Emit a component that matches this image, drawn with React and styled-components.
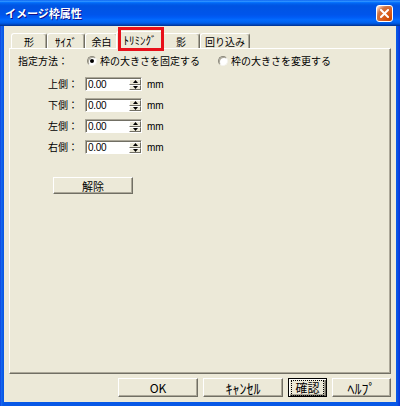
import React from 'react';
import styled, { createGlobalStyle, css } from 'styled-components';

const GlobalStyle = createGlobalStyle`
  html, body { margin: 0; padding: 0; background: #fff; }
  body { font-family: "Noto Sans CJK JP", "Noto Sans", sans-serif; color: #000; }
  * { box-sizing: border-box; }
`;

const Window = styled.div`
  width: 400px;
  height: 406px;
  display: flex;
  flex-direction: column;
  background: linear-gradient(to right, #0831d9 0, #1a6cf0 1px, #0858e6 3px, #0858e6 calc(100% - 3px), #0831d9 100%);
`;

const TitleBar = styled.div`
  flex: none;
  height: 26px;
  display: flex;
  align-items: center;
  justify-content: space-between;
  padding: 0 7px 0 5px;
  background: linear-gradient(180deg, #0058ee 0%, #3593ff 4%, #288eff 6%, #127dff 8%, #036ffc 10%, #0262ee 14%, #0057e5 20%, #0054e3 24%, #0055eb 56%, #005bf5 66%, #026afe 76%, #0062ef 86%, #0052d6 92%, #0040ab 96%, #003092 100%);
`;

const Title = styled.span`
  color: #fff;
  font-size: 11px;
  font-weight: bold;
  text-shadow: 1px 1px #0f1089;
`;

const CloseButton = styled.div`
  width: 17px;
  height: 17px;
  margin-top: 1px;
  border: 1px solid #fff;
  border-radius: 3px;
  display: flex;
  align-items: center;
  justify-content: center;
  background: radial-gradient(circle at 90% 90%, #cc4600 0%, #dc6527 55%, #cd7546 70%, #ffccb2 90%, #fff 100%);
`;

const Body = styled.div`
  flex: 1;
  min-height: 0;
  margin: 0 4px 4px;
  background: #ece9d8;
  display: flex;
  flex-direction: column;
  padding: 7px 5px 5px;
`;

const TabRow = styled.div`
  flex: none;
  height: 15px;
  display: flex;
  align-items: flex-end;
  padding-left: 2px;
  position: relative;
  z-index: 2;
`;

const Tab = styled.div`
  position: relative;
  flex: none;
  width: ${p => p.$w}px;
  height: 15px;
  display: flex;
  align-items: center;
  justify-content: center;
  padding-top: 1px;
  font-size: 10px;
  line-height: 12px;
  white-space: nowrap;
  background: #ece9d8;
  border-top: 1px solid #fff;
  border-left: 1px solid #fff;
  border-right: 1px solid #716f64;
  box-shadow: inset -1px 0 #aca899;
  border-radius: 3px 3px 0 0;
  ${p => p.$active && css`
    height: 18px;
    margin: 0 -2px -1px;
    padding-bottom: 3px;
    z-index: 3;
  `}
`;

const Kana = styled.span`
  font-size: ${p => p.$fs}px;
  line-height: 12px;
`;

const Highlight = styled.div`
  position: absolute;
  top: -5px;
  left: 1px;
  right: -1px;
  bottom: -2px;
  border: 3px solid #e8101a;
  pointer-events: none;
`;

const Panel = styled.div`
  flex: 1;
  position: relative;
  z-index: 1;
  border: 1px solid;
  border-color: #fff #716f64 #716f64 #fff;
  box-shadow: inset -1px -1px #aca899;
  padding: 6px 8px;
  display: flex;
  flex-direction: column;
  align-items: flex-start;
  font-size: 10px;
`;

const MethodRow = styled.div`
  height: 12px;
  display: flex;
  align-items: center;
  line-height: 12px;
`;

const MethodLabel = styled.span`
  width: 69px;
`;

const RadioOption = styled.label`
  display: flex;
  align-items: center;
  gap: 3px;
  margin-right: 18px;
  white-space: nowrap;
`;

const RadioCircle = styled.span`
  width: 10px;
  height: 10px;
  border-radius: 50%;
  background: #fff;
  border: 1px solid;
  border-color: #8a877a #f4f3ee #f4f3ee #8a877a;
  box-shadow: inset 1px 1px #aca899;
  display: flex;
  align-items: center;
  justify-content: center;
  &::after {
    content: "";
    width: 4px;
    height: 4px;
    border-radius: 50%;
    background: ${p => (p.$checked ? '#000' : 'transparent')};
  }
`;

const FieldList = styled.div`
  display: flex;
  flex-direction: column;
  gap: 7px;
  margin-top: 10px;
`;

const FieldRow = styled.div`
  height: 14px;
  display: flex;
  align-items: center;
`;

const FieldLabel = styled.span`
  width: 37px;
  margin-left: 30px;
  line-height: 12px;
  white-space: nowrap;
`;

const SpinBox = styled.div`
  width: 57px;
  height: 14px;
  display: flex;
  border: 1px solid;
  border-color: #aca899 #fff #fff #aca899;
  box-shadow: inset 1px 1px #716f64;
`;

const SpinInput = styled.div`
  flex: 1;
  margin: 1px 0 0 1px;
  background: #fff;
  font-family: "Liberation Sans", Arial, sans-serif;
  font-size: 10px;
  line-height: 12px;
  padding-left: 1px;
  letter-spacing: -0.3px;
`;

const SpinButtons = styled.div`
  width: 12px;
  display: flex;
  flex-direction: column;
  margin-top: 1px;
`;

const SpinButton = styled.div`
  flex: 1;
  background: #ece9d8;
  border: 1px solid;
  border-color: #fff #716f64 #716f64 #fff;
  display: flex;
  align-items: center;
  justify-content: center;
`;

const Unit = styled.span`
  margin-left: 5px;
  font-family: "Liberation Sans", Arial, sans-serif;
  font-size: 10px;
`;

const Button = styled.div`
  flex: none;
  width: ${p => p.$w}px;
  height: ${p => p.$h || 19}px;
  background: #ece9d8;
  border: 1px solid;
  border-color: #fff #716f64 #716f64 #fff;
  box-shadow: inset -1px -1px #aca899;
  display: flex;
  align-items: center;
  justify-content: center;
  font-size: ${p => p.$fs || 12}px;
  line-height: 14px;
  white-space: nowrap;
  ${p => p.$default && css`
    border: 1px solid #000;
    box-shadow: inset 1px 1px #fff, inset -1px -1px #716f64, inset -2px -2px #aca899;
  `}
`;

const FocusLabel = styled.span`
  outline: 1px dotted #000;
  outline-offset: 0;
  padding: 0 3px;
`;

const ReleaseButton = styled(Button)`
  margin: 23px 0 0 35px;
`;

const Footer = styled.div`
  flex: none;
  height: 19px;
  margin-top: 4px;
  display: flex;
  justify-content: flex-end;
  gap: 5px;
`;

const Arrow = ({ up }) => (
  <svg width="5" height="3" viewBox="0 0 5 3">
    <path d={up ? 'M2.5 0 L5 3 L0 3 Z' : 'M0 0 L5 0 L2.5 3 Z'} fill="#000" />
  </svg>
);

const tabs = [
  { label: '形', w: 36 },
  { label: 'ｻｲｽﾞ', w: 38, kana: true },
  { label: '余白', w: 33 },
  { label: 'ﾄﾘﾐﾝｸﾞ', w: 48, active: true, kana: true },
  { label: '影', w: 38 },
  { label: '回り込み', w: 50 },
];

const fields = ['上側：', '下側：', '左側：', '右側：'];

export default function App() {
  return (
    <>
      <GlobalStyle />
      <Window>
        <TitleBar>
          <Title>イメージ枠属性</Title>
          <CloseButton>
            <svg width="9" height="9" viewBox="0 0 9 9">
              <path d="M1 1 L8 8 M8 1 L1 8" stroke="#fff" strokeWidth="2" strokeLinecap="square" />
            </svg>
          </CloseButton>
        </TitleBar>
        <Body>
          <TabRow>
            {tabs.map(t => (
              <Tab key={t.label} $w={t.w} $active={t.active}>
                {t.kana ? <Kana $fs={11}>{t.label}</Kana> : t.label}
                {t.active && <Highlight />}
              </Tab>
            ))}
          </TabRow>
          <Panel>
            <MethodRow>
              <MethodLabel>指定方法：</MethodLabel>
              <RadioOption>
                <RadioCircle $checked />
                枠の大きさを固定する
              </RadioOption>
              <RadioOption>
                <RadioCircle />
                枠の大きさを変更する
              </RadioOption>
            </MethodRow>
            <FieldList>
              {fields.map(f => (
                <FieldRow key={f}>
                  <FieldLabel>{f}</FieldLabel>
                  <SpinBox>
                    <SpinInput>0.00</SpinInput>
                    <SpinButtons>
                      <SpinButton><Arrow up /></SpinButton>
                      <SpinButton><Arrow /></SpinButton>
                    </SpinButtons>
                  </SpinBox>
                  <Unit>mm</Unit>
                </FieldRow>
              ))}
            </FieldList>
            <ReleaseButton $w={80} $h={17} $fs={11}>解除</ReleaseButton>
          </Panel>
          <Footer>
            <Button $w={80}>OK</Button>
            <Button $w={80}><Kana $fs={14}>ｷｬﾝｾﾙ</Kana></Button>
            <Button $w={39} $default><FocusLabel>確認</FocusLabel></Button>
            <Button $w={59}><Kana $fs={14}>ﾍﾙﾌﾟ</Kana></Button>
          </Footer>
        </Body>
      </Window>
    </>
  );
}
